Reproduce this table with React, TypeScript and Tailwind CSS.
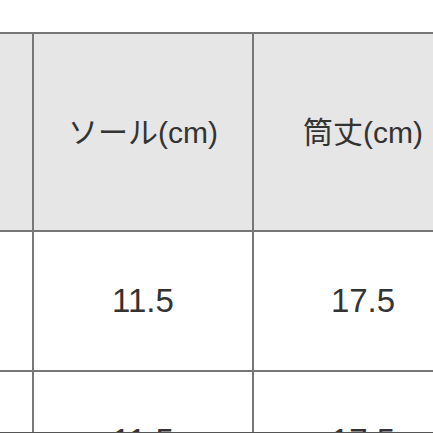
const cell = "w-[220px] border-2 border-[#777777] text-center align-middle p-0";

const rows = [
  ["11.5", "17.5"],
  ["11.5", "17.5"],
];

export default function App() {
  return (
    <div
      className="w-[433px] h-[433px] overflow-hidden bg-white text-[#333333] border-b border-[#555555]"
      style={{ fontFamily: '"Liberation Sans", "Noto Sans CJK JP", sans-serif' }}
    >
      <table className="border-collapse table-fixed w-[662px] mt-[32px] -ml-[188px]">
        <tbody>
          <tr className="h-[198px] bg-[#e6e6e6]">
            <td className={cell}></td>
            <td className={cell + " text-[30px]"}>ソール(cm)</td>
            <td className={cell + " text-[30px]"}>筒丈(cm)</td>
          </tr>
          {rows.map((r, i) => (
            <tr key={i} className="h-[140px] bg-white">
              <td className={cell}></td>
              <td className={cell + " text-[33px]"}>{r[0]}</td>
              <td className={cell + " text-[33px]"}>{r[1]}</td>
            </tr>
          ))}
        </tbody>
      </table>
    </div>
  );
}
